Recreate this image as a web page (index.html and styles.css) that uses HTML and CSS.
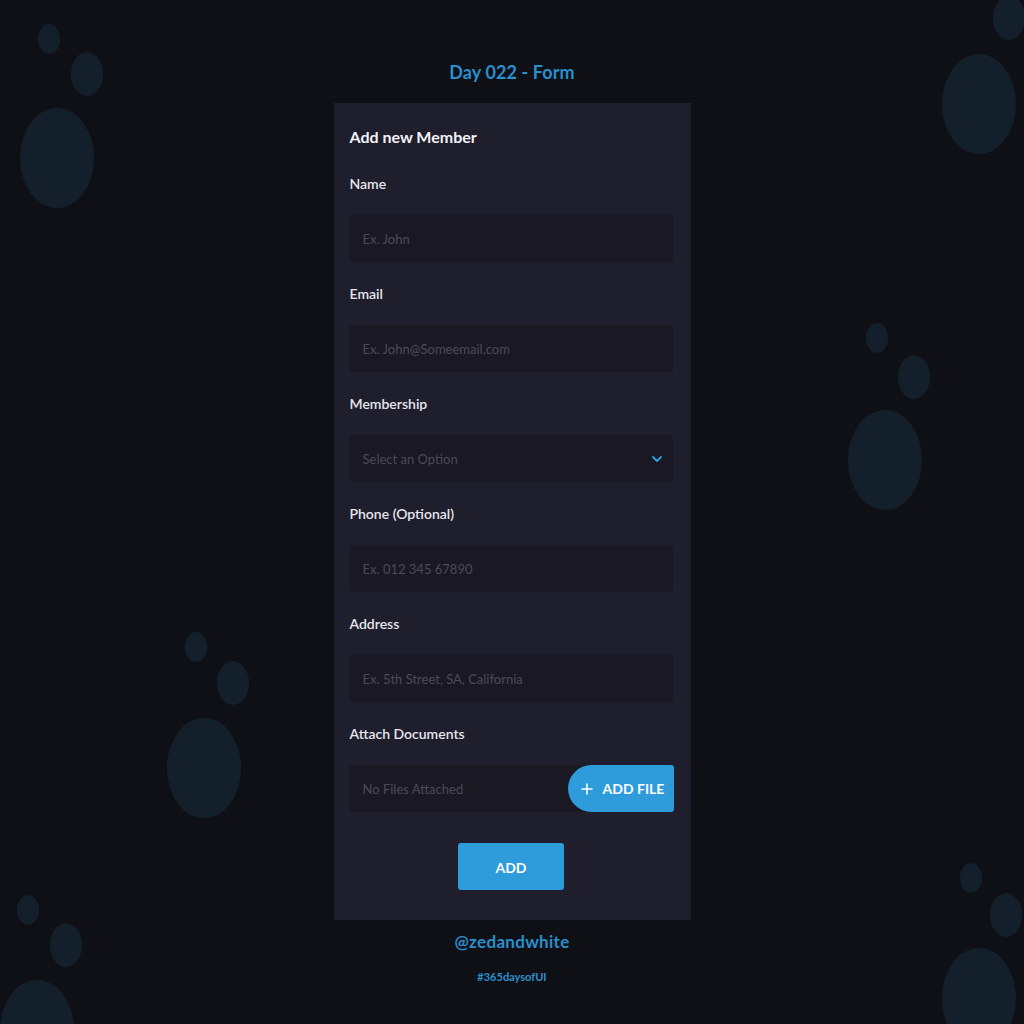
FILE: index.html
```html
<!DOCTYPE html>
<html lang="en">
<head>
<meta charset="utf-8">
<title>Day 022 - Form</title>
<link rel="stylesheet" href="styles.css">
</head>
<body>
<div class="bubbles">
  <span class="bubble s" style="left:38px;top:24px"></span>
  <span class="bubble m" style="left:71px;top:52px"></span>
  <span class="bubble l" style="left:20px;top:108px"></span>

  <span class="bubble s" style="left:993px;top:-4px;width:32px;height:44px"></span>
  <span class="bubble l" style="left:942px;top:54px"></span>

  <span class="bubble s" style="left:866px;top:323px"></span>
  <span class="bubble m" style="left:898px;top:355px"></span>
  <span class="bubble l" style="left:848px;top:410px"></span>

  <span class="bubble s" style="left:185px;top:632px"></span>
  <span class="bubble m" style="left:217px;top:661px"></span>
  <span class="bubble l" style="left:167px;top:718px"></span>

  <span class="bubble s" style="left:17px;top:895px"></span>
  <span class="bubble m" style="left:50px;top:923px"></span>
  <span class="bubble l" style="left:0px;top:980px"></span>

  <span class="bubble s" style="left:960px;top:863px"></span>
  <span class="bubble m" style="left:990px;top:893px"></span>
  <span class="bubble l" style="left:942px;top:948px"></span>
</div>

<main class="page">
  <h1 class="day-title">Day 022 - Form</h1>

  <form class="card">
    <h2 class="card-title">Add new Member</h2>

    <div class="field">
      <label class="label">Name</label>
      <div class="input"><span class="ph">Ex. John</span></div>
    </div>

    <div class="field">
      <label class="label">Email</label>
      <div class="input"><span class="ph">Ex. John@Someemail.com</span></div>
    </div>

    <div class="field">
      <label class="label">Membership</label>
      <div class="input select">
        <span class="ph">Select an Option</span>
        <svg class="chev" width="12" height="8" viewBox="0 0 12 8"><path d="M2 2 L6 6 L10 2" fill="none" stroke="#2d9bdb" stroke-width="2" stroke-linecap="round" stroke-linejoin="round"/></svg>
      </div>
    </div>

    <div class="field">
      <label class="label">Phone (Optional)</label>
      <div class="input"><span class="ph">Ex. 012 345 67890</span></div>
    </div>

    <div class="field">
      <label class="label">Address</label>
      <div class="input"><span class="ph">Ex. 5th Street, SA, California</span></div>
    </div>

    <div class="field">
      <label class="label">Attach Documents</label>
      <div class="input file">
        <span class="ph">No Files Attached</span>
        <button type="button" class="add-file">
          <svg width="12" height="12" viewBox="0 0 12 12"><path d="M6 1 V11 M1 6 H11" stroke="#fff" stroke-width="1.6" stroke-linecap="round"/></svg>
          <span>ADD FILE</span>
        </button>
      </div>
    </div>

    <div class="actions">
      <button type="button" class="add-btn">ADD</button>
    </div>
  </form>

  <p class="handle">@zedandwhite</p>
  <p class="tag">#365daysofUI</p>
</main>
</body>
</html>
```

FILE: styles.css
```css
* { box-sizing: border-box; }

html, body {
  margin: 0;
  padding: 0;
  background: #0f1015;
  height: 1024px;
  overflow: hidden;
}

body {
  font-family: Lato, "Open Sans", sans-serif;
  position: relative;
}

.bubbles {
  position: absolute;
  inset: 0;
  z-index: 0;
  overflow: hidden;
}

.bubble {
  position: absolute;
  border-radius: 50%;
  background: #13202c;
}
.bubble.s { width: 22px; height: 30px; }
.bubble.m { width: 32px; height: 44px; }
.bubble.l { width: 74px; height: 100px; }

.page {
  position: relative;
  z-index: 1;
  display: flex;
  flex-direction: column;
  align-items: center;
  padding-top: 60px;
}

.day-title {
  margin: 0 0 19px;
  font-size: 18px;
  line-height: 24px;
  font-weight: 700;
  color: #2a8fcc;
  letter-spacing: 0.1px;
}

.card {
  width: 357px;
  background: #1f1e2d;
  padding: 22px 18px 30px 16px;
  display: flex;
  flex-direction: column;
  gap: 22px;
}

.card-title {
  margin: 0 0 3px;
  font-size: 16px;
  line-height: 24px;
  font-weight: 700;
  color: #f2f2f6;
}

.field {
  display: flex;
  flex-direction: column;
  gap: 21px;
}

.label {
  font-size: 14px;
  line-height: 20px;
  font-weight: 600;
  color: #e6e6ec;
}

.input {
  height: 47px;
  background: #191823;
  border-radius: 3px;
  display: flex;
  align-items: center;
  padding: 0 13px;
  position: relative;
}

.ph {
  font-size: 13px;
  color: #4c4b5a;
}

.select { justify-content: space-between; padding-right: 10px; }
.chev { display: block; }

.file { padding-right: 0; justify-content: space-between; }

.add-file {
  height: 47px;
  width: 106px;
  margin-right: -1px;
  border: 0;
  background: #2e9bdb;
  color: #fff;
  border-radius: 24px 3px 3px 24px;
  display: flex;
  align-items: center;
  justify-content: center;
  gap: 10px;
  font-family: Lato, "Open Sans", sans-serif;
  font-size: 14px;
  font-weight: 700;
  padding: 0 0 0 4px;
}

.actions {
  display: flex;
  justify-content: center;
  margin-top: 9px;
}

.add-btn {
  width: 106px;
  height: 47px;
  border: 0;
  border-radius: 3px;
  background: #2e9bdb;
  color: #fff;
  font-family: Lato, "Open Sans", sans-serif;
  font-size: 14px;
  font-weight: 700;
  padding-top: 2px;
}

.handle {
  margin: 12px 0 0;
  font-size: 17px;
  line-height: 20px;
  font-weight: 700;
  color: #2a8fcc;
  letter-spacing: 0.3px;
}

.tag {
  margin: 18px 0 0;
  font-size: 11px;
  line-height: 14px;
  font-weight: 700;
  color: #2a8fcc;
}
```
